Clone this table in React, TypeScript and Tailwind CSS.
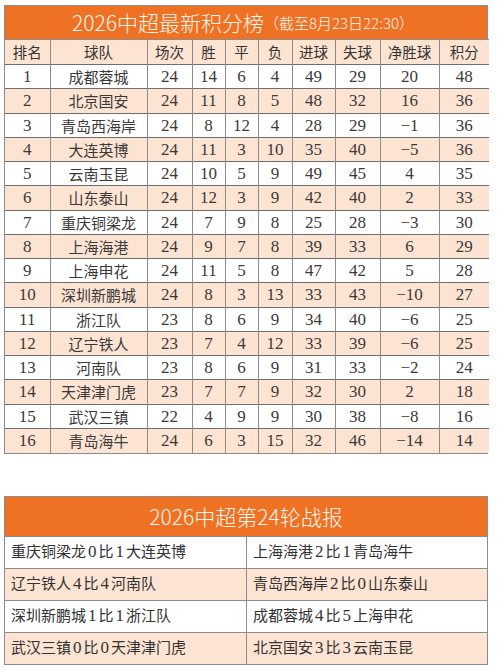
import React from 'react';

const rows: [number, string, number, number, number, number, number, number, string, number][] = [
  [1, '成都蓉城', 24, 14, 6, 4, 49, 29, '20', 48],
  [2, '北京国安', 24, 11, 8, 5, 48, 32, '16', 36],
  [3, '青岛西海岸', 24, 8, 12, 4, 28, 29, '-1', 36],
  [4, '大连英博', 24, 11, 3, 10, 35, 40, '-5', 36],
  [5, '云南玉昆', 24, 10, 5, 9, 49, 45, '4', 35],
  [6, '山东泰山', 24, 12, 3, 9, 42, 40, '2', 33],
  [7, '重庆铜梁龙', 24, 7, 9, 8, 25, 28, '-3', 30],
  [8, '上海海港', 24, 9, 7, 8, 39, 33, '6', 29],
  [9, '上海申花', 24, 11, 5, 8, 47, 42, '5', 28],
  [10, '深圳新鹏城', 24, 8, 3, 13, 33, 43, '-10', 27],
  [11, '浙江队', 23, 8, 6, 9, 34, 40, '-6', 25],
  [12, '辽宁铁人', 23, 7, 4, 12, 33, 39, '-6', 25],
  [13, '河南队', 23, 8, 6, 9, 31, 33, '-2', 24],
  [14, '天津津门虎', 23, 7, 7, 9, 32, 30, '2', 18],
  [15, '武汉三镇', 22, 4, 9, 9, 30, 38, '-8', 16],
  [16, '青岛海牛', 24, 6, 3, 15, 32, 46, '-14', 14],
];

const headers = ['排名', '球队', '场次', '胜', '平', '负', '进球', '失球', '净胜球', '积分'];
const widths = ['w-[45px]', 'w-[97px]', 'w-[45px]', 'w-[33px]', 'w-[33px]', 'w-[34px]', 'w-[43px]', 'w-[45px]', 'w-[59px]', 'w-[50px]'];

const matches: [string, string, string, string][] = [
  ['重庆铜梁龙', '0', '1', '大连英博'],
  ['上海海港', '2', '1', '青岛海牛'],
  ['辽宁铁人', '4', '4', '河南队'],
  ['青岛西海岸', '2', '0', '山东泰山'],
  ['深圳新鹏城', '1', '1', '浙江队'],
  ['成都蓉城', '4', '5', '上海申花'],
  ['武汉三镇', '0', '0', '天津津门虎'],
  ['北京国安', '3', '3', '云南玉昆'],
];

const serif = "font-['Liberation_Serif','Noto_Sans_CJK_SC',serif]";
const sans = "font-['Noto_Sans_CJK_SC','Liberation_Sans',sans-serif]";

function MatchCell({ m }: { m: [string, string, string, string] }) {
  return (
    <div className={`px-[6px] text-[15px] text-[#333] ${serif} whitespace-nowrap`}>
      {m[0]}
      <span className="text-[17px] mx-[2px]">{m[1]}</span>比<span className="text-[17px] mx-[2px]">{m[2]}</span>
      {m[3]}
    </div>
  );
}

export default function App() {
  return (
    <div className="bg-white w-[500px] h-[671px] pl-[4px] pt-[5px]">
      {/* STANDINGS TABLE */}
      <div className="w-[484px] border border-[#8c8c8c]">
        <div className={`h-[33px] bg-[#ee7124] flex items-center justify-center text-[#fff6ee] ${sans} font-light pr-[6px]`}>
          <span className="text-[21px] leading-none">2026中超最新积分榜</span>
          <span className="text-[15px] leading-none">（截至8月23日22:30）</span>
        </div>
        <table className="table-fixed border-collapse w-full">
          <thead>
            <tr className="bg-[#fde4d2] h-[25px]">
              {headers.map((h, i) => (
                <th key={h} className={`${widths[i]} border-t border-[#8c8c8c] ${i > 0 ? 'border-l' : ''} font-normal text-[14.5px] text-[#333] ${sans} leading-none p-0`}>
                  {h}
                </th>
              ))}
            </tr>
          </thead>
          <tbody>
            {rows.map((r, ri) => (
              <tr key={r[0]} className={`h-[24.25px] ${ri % 2 === 1 ? 'bg-[#fde4d2]' : 'bg-white'}`}>
                {r.map((c, i) => (
                  <td
                    key={i}
                    className={`border-t border-[#6e6e6e] ${i > 0 ? 'border-l border-l-[#8c8c8c]' : ''} text-center p-0 leading-none text-[#3a3a3a] ${
                      i === 1 ? `text-[15px] ${sans}` : `text-[17px] ${serif}`
                    }`}
                  >
                    {typeof c === 'string' && c.startsWith('-') ? '−' + c.slice(1) : c}
                  </td>
                ))}
              </tr>
            ))}
          </tbody>
        </table>
      </div>

      {/* ROUND REPORT */}
      <div className="w-[484px] border border-[#8c8c8c] mt-[42px]">
        <div className={`h-[39px] bg-[#ee7124] flex items-center justify-center text-[#fff6ee] ${sans} font-light text-[21px] leading-none`}>
          2026中超第24轮战报
        </div>
        <div className="grid grid-cols-2">
          {matches.map((m, i) => {
            const row = Math.floor(i / 2);
            return (
              <div
                key={i}
                className={`h-[32px] flex items-center border-t border-[#8c8c8c] ${i % 2 === 1 ? 'border-l' : ''} ${row % 2 === 1 ? 'bg-[#fde4d2]' : 'bg-white'}`}
              >
                <MatchCell m={m} />
              </div>
            );
          })}
        </div>
      </div>
    </div>
  );
}
